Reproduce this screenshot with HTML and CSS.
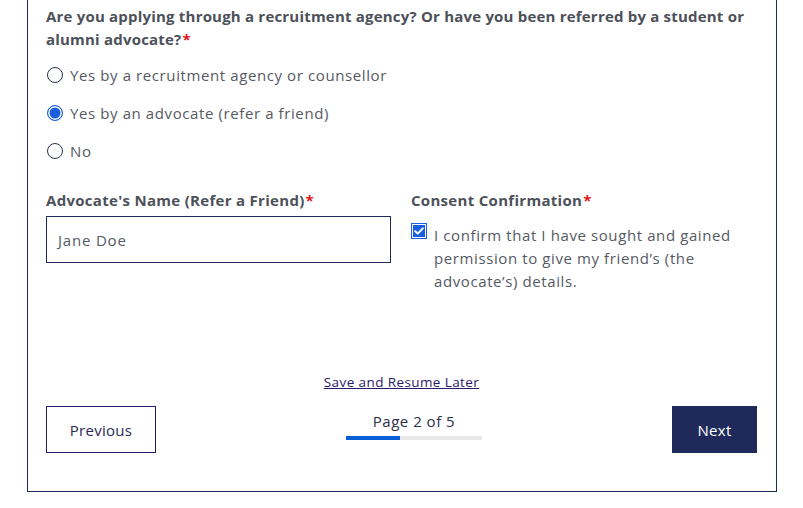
FILE: index.html
```html
<!DOCTYPE html>
<html lang="en">
<head>
<meta charset="utf-8">
<title>Application form</title>
<link rel="stylesheet" href="styles.css">
</head>
<body>
<div class="card">
  <div class="question">
    <div class="q-title">Are you applying through a recruitment agency? Or have you been referred by a student or alumni advocate?<span class="req">*</span></div>
    <label class="radio"><span class="dot"></span>Yes by a recruitment agency or counsellor</label>
    <label class="radio"><span class="dot on"></span>Yes by an advocate (refer a friend)</label>
    <label class="radio"><span class="dot"></span>No</label>
  </div>

  <div class="cols">
    <div class="col">
      <div class="label">Advocate's Name (Refer a Friend)<span class="req">*</span></div>
      <div class="input">Jane Doe</div>
    </div>
    <div class="col">
      <div class="label">Consent Confirmation<span class="req">*</span></div>
      <div class="check">
        <span class="box"><svg width="10" height="8" viewBox="0 0 10 8"><path d="M1.2 4.2 L3.8 6.6 L8.8 1.4" fill="none" stroke="#fff" stroke-width="2" stroke-linecap="round" stroke-linejoin="round"/></svg></span>
        <span class="check-text">I confirm that I have sought and gained permission to give my friend’s (the advocate’s) details.</span>
      </div>
    </div>
  </div>

  <div class="save"><a href="#">Save and Resume Later</a></div>

  <div class="nav">
    <button class="btn prev">Previous</button>
    <div class="pager">
      <div class="pager-text">Page 2 of 5</div>
      <div class="track"><div class="fill" style="width:40%"></div></div>
    </div>
    <button class="btn next">Next</button>
  </div>
</div>
</body>
</html>
```

FILE: styles.css
```css
html, body {
  margin: 0;
  padding: 0;
  background: #fff;
}
body {
  font-family: "Open Sans", "Liberation Sans", sans-serif;
  color: #555a63;
}
.card {
  margin-left: 27px;
  width: 750px;
  box-sizing: border-box;
  border: 1px solid #1f2a5a;
  border-top: none;
  padding: 5px 19px 38px 18px;
}
.q-title {
  font-weight: 700;
  font-size: 15px;
  line-height: 23px;
  color: #4d5159;
  letter-spacing: 0.2px;
  margin-bottom: 5px;
}
.req {
  color: #e0151b;
  letter-spacing: 0;
  padding-left: 1px;
}
.radio {
  display: flex;
  align-items: center;
  height: 38px;
  font-size: 15px;
  color: #555a63;
  letter-spacing: 0.6px;
}
.dot {
  width: 14px;
  height: 14px;
  border: 1.5px solid #2b3152;
  border-radius: 50%;
  margin-left: 1px;
  margin-right: 7px;
  box-sizing: content-box;
  flex: none;
}
.dot.on {
  border-color: #1a5ee0;
  background: #1a5ee0;
  box-shadow: inset 0 0 0 1.5px #fff;
}
.cols {
  display: grid;
  grid-template-columns: 345px 345px;
  column-gap: 20px;
  margin-top: 19px;
}
.label {
  font-weight: 700;
  font-size: 15px;
  line-height: 22px;
  color: #4d5159;
  letter-spacing: 0.3px;
}
.input {
  margin-top: 5px;
  height: 47px;
  box-sizing: border-box;
  border: 1px solid #1f2a5a;
  padding: 0 11px;
  display: flex;
  align-items: center;
  font-size: 15px;
  color: #555a63;
  letter-spacing: 0.8px;
}
.check {
  display: flex;
  align-items: flex-start;
  margin-top: 12px;
}
.box {
  width: 14px;
  height: 14px;
  flex: none;
  background: #1a5ee0;
  border: 1px solid #1a5ee0;
  box-shadow: inset 0 0 0 1px #fff;
  display: flex;
  align-items: center;
  justify-content: center;
  margin-top: 0;
  margin-right: 7px;
}
.check-text {
  font-size: 15px;
  line-height: 23px;
  margin-top: 1px;
  color: #555a63;
  letter-spacing: 0.6px;
}
.save {
  text-align: center;
  margin-top: 80px;
  font-size: 13.5px;
  line-height: 18px;
  letter-spacing: 0.4px;
}
.save a {
  color: #2a1a6e;
  text-decoration: underline;
}
.nav {
  display: flex;
  justify-content: space-between;
  align-items: flex-start;
  margin-top: 15px;
}
.btn {
  font-family: inherit;
  font-size: 15px;
  height: 47px;
  box-sizing: border-box;
  cursor: pointer;
  letter-spacing: 0.3px;
}
.prev {
  width: 110px;
  background: #fff;
  border: 1px solid #2a1a6e;
  color: #2a2a55;
}
.next {
  width: 85px;
  background: #1f2a5a;
  border: none;
  color: #fff;
}
.pager {
  display: flex;
  flex-direction: column;
  align-items: center;
}
.pager-text {
  font-size: 15px;
  line-height: 18px;
  margin-top: 6px;
  color: #2a2e4a;
  letter-spacing: 0.5px;
}
.track {
  width: 136px;
  height: 4px;
  margin-top: 6px;
  background: #e8e8e8;
}
.fill {
  height: 100%;
  background: #0a5fd6;
}
```
